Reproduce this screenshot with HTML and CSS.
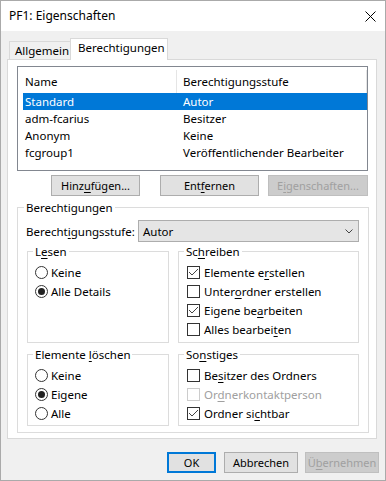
FILE: index.html
```html
<!DOCTYPE html>
<html lang="de">
<head>
    <meta charset="UTF-8">
    <meta name="viewport" content="width=device-width, initial-scale=1.0">
    <title>PF1: Eigenschaften</title>
    <link rel="stylesheet" href="styles.css">
</head>
<body>
    <div class="window">
        <div class="titlebar">
            <span class="title">PF1: Eigenschaften</span>
            <svg class="close" width="11" height="11" viewBox="0 0 11 11">
                <path d="M0.5 0.5 L10.5 10.5 M10.5 0.5 L0.5 10.5" stroke="#000" stroke-width="1" fill="none"/>
            </svg>
        </div>
        <div class="client">
            <div class="tabs">
                <div class="tab">Allgemein</div>
                <div class="tab tab-active">Berechtigungen</div>
            </div>
            <div class="page">
                <div class="list">
                    <div class="list-head">
                        <div class="head-cell head-name">Name</div>
                        <div class="head-cell head-level">Berechtigungsstufe</div>
                    </div>
                    <div class="row selected"><span class="row-name">Standard</span><span>Autor</span></div>
                    <div class="row"><span class="row-name">adm-fcarius</span><span>Besitzer</span></div>
                    <div class="row"><span class="row-name">Anonym</span><span>Keine</span></div>
                    <div class="row"><span class="row-name">fcgroup1</span><span>Veröffentlichender Bearbeiter</span></div>
                </div>
                <div class="list-buttons">
                    <button class="btn btn-add">Hinz<u>u</u>fügen...</button>
                    <button class="btn btn-remove">Ent<u>f</u>ernen</button>
                    <button class="btn btn-props" disabled>E<u>i</u>genschaften...</button>
                </div>
                <div class="group">
                    <div class="group-title">Berechtigungen</div>
                    <div class="level-row">
                        <span class="level-label">Berecht<u>i</u>gungsstufe:</span>
                        <div class="combo">
                            <span>Autor</span>
                            <svg width="8" height="5" viewBox="0 0 8 5">
                                <path d="M0.5 0.5 L4 4 L7.5 0.5" stroke="#444" stroke-width="1" fill="none"/>
                            </svg>
                        </div>
                    </div>
                    <div class="subgroups">
                        <div class="sub">
                            <div class="group-title">L<u>e</u>sen</div>
                            <div class="options">
                                <div class="option"><span class="radio"></span><span>Keine</span></div>
                                <div class="option"><span class="radio checked"></span><span>Alle Details</span></div>
                            </div>
                        </div>
                        <div class="sub">
                            <div class="group-title">Sc<u>h</u>reiben</div>
                            <div class="options">
                                <div class="option"><span class="check"><svg width="11" height="11" viewBox="0 0 11 11"><path d="M1 5 L4 8 L10 2" stroke="#444" stroke-width="1" fill="none"/></svg></span><span>Elemente e<u>r</u>stellen</span></div>
                                <div class="option"><span class="check"></span><span>Unter<u>o</u>rdner erstellen</span></div>
                                <div class="option"><span class="check"><svg width="11" height="11" viewBox="0 0 11 11"><path d="M1 5 L4 8 L10 2" stroke="#444" stroke-width="1" fill="none"/></svg></span><span>Eigene be<u>a</u>rbeiten</span></div>
                                <div class="option"><span class="check"></span><span>Alles bearbei<u>t</u>en</span></div>
                            </div>
                        </div>
                        <div class="sub">
                            <div class="group-title">Elemente <u>l</u>öschen</div>
                            <div class="options">
                                <div class="option"><span class="radio"></span><span>Keine</span></div>
                                <div class="option"><span class="radio checked"></span><span>Eigene</span></div>
                                <div class="option"><span class="radio"></span><span>Alle</span></div>
                            </div>
                        </div>
                        <div class="sub">
                            <div class="group-title">So<u>n</u>stiges</div>
                            <div class="options">
                                <div class="option"><span class="check"></span><span>Be<u>s</u>itzer des Ordners</span></div>
                                <div class="option disabled"><span class="check"></span><span>Or<u>d</u>nerkontaktperson</span></div>
                                <div class="option"><span class="check"><svg width="11" height="11" viewBox="0 0 11 11"><path d="M1 5 L4 8 L10 2" stroke="#444" stroke-width="1" fill="none"/></svg></span><span>Ordner si<u>c</u>htbar</span></div>
                            </div>
                        </div>
                    </div>
                </div>
            </div>
            <div class="dialog-buttons">
                <button class="btn btn-ok">OK</button>
                <button class="btn btn-cancel">Abbrechen</button>
                <button class="btn btn-apply" disabled>Ü<u>b</u>ernehmen</button>
            </div>
        </div>
    </div>
</body>
</html>
```

FILE: styles.css
```css
body { margin: 0; font-family: "Noto Sans", sans-serif; font-size: 11.5px; color: #000; }
u { text-decoration-thickness: 1px; text-underline-offset: 2px; }

.window { width: 386px; height: 481px; box-sizing: border-box; border: 1px solid #aaa; display: flex; flex-direction: column; background: #f0f0f0; }
.titlebar { height: 30px; flex: none; background: #fff; display: flex; align-items: center; justify-content: space-between; padding: 0 9px 0 8px; }
.title { font-size: 12px; line-height: 16px; }

.client { flex: 1; padding: 7px 6px 0 6px; }
.tabs { display: flex; align-items: flex-end; height: 21px; margin-left: 2px; }
.tab { width: 62px; height: 18px; box-sizing: border-box; border: 1px solid #d9d9d9; border-bottom: none; padding-left: 5px; line-height: 17px; white-space: nowrap; }
.tab-active { position: relative; width: 98px; height: 22px; margin-left: -1px; margin-bottom: -1px; padding-left: 7px; background: #fff; line-height: 18px; }

.page { width: 370px; height: 380px; box-sizing: border-box; border: 1px solid #d9d9d9; background: #fff; padding: 6px 8px 0 9px; }

.list { width: 351px; height: 105px; box-sizing: border-box; border: 1px solid #828790; background: #fff; }
.list-head { display: flex; height: 26px; }
.head-cell { margin-top: 3px; height: 23px; line-height: 23px; box-sizing: border-box; border-right: 1px solid #e5e5e5; }
.head-name { width: 159px; padding-left: 7px; }
.head-level { flex: 1; padding-left: 6px; }
.row { display: flex; height: 17px; line-height: 17px; margin-left: 5px; padding-left: 2px; white-space: nowrap; }
.row-name { width: 158px; flex: none; }
.selected { background: #0078d7; color: #fff; }

.btn { height: 21px; box-sizing: border-box; border: 1px solid #adadad; background: #e1e1e1; font: inherit; font-size: 11px; color: #000; padding: 0; line-height: 19px; white-space: nowrap; }
.btn:disabled { background: #cccccc; border-color: #bfbfbf; color: #a0a0a0; }
.list-buttons { display: flex; justify-content: flex-end; width: 351px; margin-top: 4px; }
.btn-add { width: 89px; }
.btn-remove { width: 99px; margin-left: 20px; }
.btn-props { width: 100px; margin-left: 9px; }

.group { width: 352px; box-sizing: border-box; margin-top: 11px; border: 1px solid #dcdcdc; padding: 0 8px 6px; }
.group-title { width: fit-content; height: 16px; line-height: 16px; margin: -8px 0 0 -2px; padding: 0 2px; background: #fff; white-space: nowrap; }

.level-row { display: flex; align-items: center; height: 22px; margin-top: 4px; }
.level-label { width: 112px; flex: none; white-space: nowrap; }
.combo { width: 221px; height: 22px; box-sizing: border-box; border: 1px solid #adadad; background: #e5e5e5; display: flex; align-items: center; justify-content: space-between; padding: 0 5px 0 4px; }

.subgroups { display: grid; grid-template-columns: 142px 181px; grid-template-rows: 92px 72px; column-gap: 9px; row-gap: 11px; margin: 9px 0 0 1px; }
.sub { box-sizing: border-box; border: 1px solid #dcdcdc; padding: 0 7px; }
.options { padding-top: 3px; }
.option { display: flex; align-items: center; height: 19px; gap: 3px; white-space: nowrap; }
.option.disabled { color: #a0a0a0; }

.radio { width: 13px; height: 13px; box-sizing: border-box; border: 1px solid #333; border-radius: 50%; display: flex; align-items: center; justify-content: center; flex: none; }
.radio.checked::after { content: ""; width: 7px; height: 7px; border-radius: 50%; background: #222; }
.check { width: 13px; height: 13px; box-sizing: border-box; border: 1px solid #333; margin: 0 1px 0 1px; flex: none; display: flex; }
.disabled .check { border-color: #cccccc; }

.dialog-buttons { display: flex; justify-content: flex-end; margin-top: 13px; }
.btn-ok { width: 49px; border: 2px solid #0078d7; line-height: 17px; }
.btn-cancel { width: 74px; margin-left: 8px; }
.btn-apply { width: 74px; margin-left: 7px; }
```
